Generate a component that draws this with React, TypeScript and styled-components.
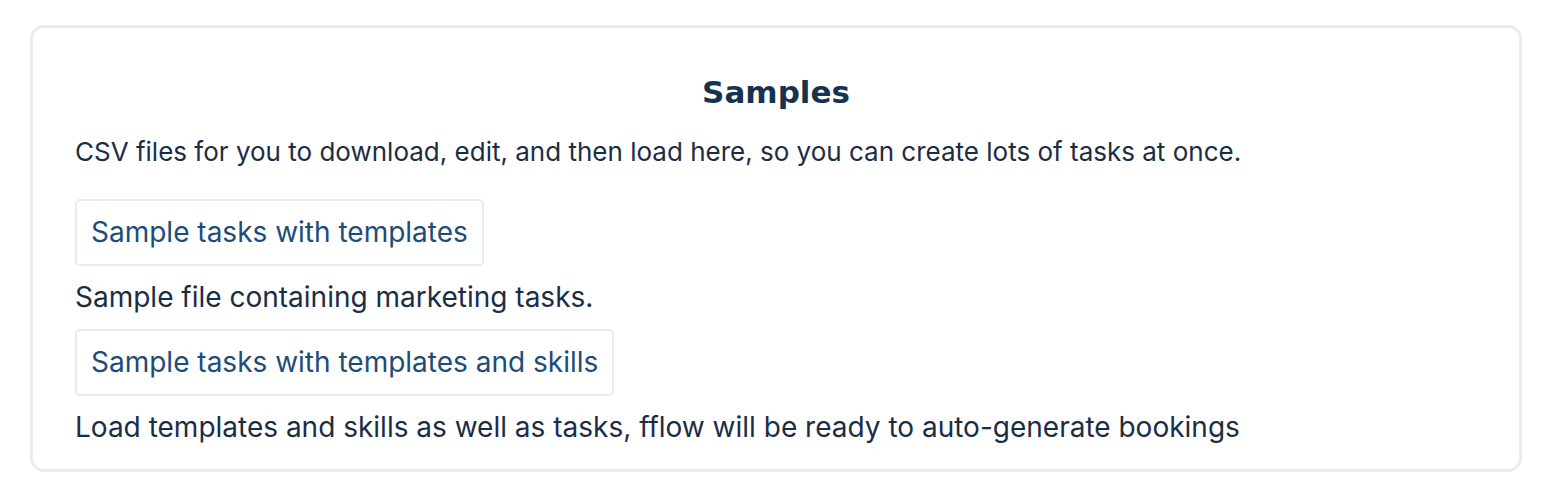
import React from "react";
import styled, { createGlobalStyle } from "styled-components";

const GlobalStyle = createGlobalStyle`
  body {
    margin: 0;
    background: #ffffff;
    font-family: Inter, "Noto Sans", sans-serif;
  }
`;

const samples = [
  {
    label: "Sample tasks with templates",
    note: "Sample file containing marketing tasks.",
  },
  {
    label: "Sample tasks with templates and skills",
    note: "Load templates and skills as well as tasks, fflow will be ready to auto-generate bookings",
  },
];

export default function App() {
  return (
    <>
      <GlobalStyle />
      <Page>
        <Card>
          <Title>Samples</Title>
          <Intro>
            CSV files for you to download, edit, and then load here, so you can create lots of tasks at once.
          </Intro>
          <List>
            {samples.map((s) => (
              <Item key={s.label}>
                <SampleButton href="#">{s.label}</SampleButton>
                <Note>{s.note}</Note>
              </Item>
            ))}
          </List>
        </Card>
      </Page>
    </>
  );
}

const Page = styled.div`
  padding: 25px 22px 0 30px;
`;

const Card = styled.section`
  box-sizing: border-box;
  width: 1492px;
  height: 447px;
  border: 3px solid #ebebeb;
  border-radius: 14px;
  padding: 42px 42px 0 42px;
`;

const Title = styled.h2`
  margin: 0;
  text-align: center;
  font-family: "DejaVu Sans", sans-serif;
  font-weight: 700;
  font-size: 31px;
  line-height: 44px;
  color: #15324f;
`;

const Intro = styled.p`
  margin: 23px 0 0;
  font-size: 26px;
  line-height: 30px;
  color: #1b2d45;
`;

const List = styled.div`
  display: flex;
  flex-direction: column;
  margin-top: 32px;
`;

const Item = styled.div`
  display: flex;
  flex-direction: column;
  align-items: flex-start;
`;

const SampleButton = styled.a`
  display: inline-block;
  box-sizing: border-box;
  height: 67px;
  padding: 0 14px;
  border: 2px solid #ebebeb;
  border-radius: 5px;
  font-size: 28px;
  line-height: 63px;
  color: #1d4c79;
  text-decoration: none;
`;

const Note = styled.p`
  margin: 0;
  font-size: 28px;
  line-height: 63px;
  color: #1b2d45;
`;
